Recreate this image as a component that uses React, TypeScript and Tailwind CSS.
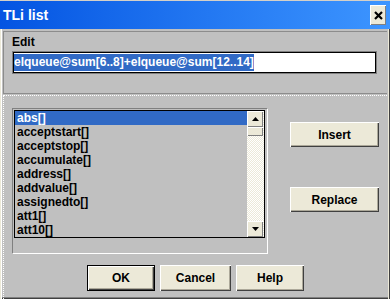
import React from "react";

const items = [
  "abs[]",
  "acceptstart[]",
  "acceptstop[]",
  "accumulate[]",
  "address[]",
  "addvalue[]",
  "assignedto[]",
  "att1[]",
  "att10[]",
];

function WinButton({
  label,
  width,
  isDefault,
}: {
  label: string;
  width: string;
  isDefault?: boolean;
}) {
  return (
    <button
      type="button"
      className={`${width} flex items-center justify-center bg-[#ece9d8] text-[12px] font-bold text-black ${
        isDefault
          ? "border border-black shadow-[inset_1px_1px_#fff,inset_-1px_-1px_#404040,inset_-2px_-2px_#aca899]"
          : "shadow-[inset_1px_1px_#fff,inset_-1px_-1px_#404040,inset_-2px_-2px_#aca899]"
      }`}
    >
      {label}
    </button>
  );
}

function ScrollArrow({ up }: { up?: boolean }) {
  return (
    <div className="flex h-[16px] w-[16px] items-center justify-center bg-[#ece9d8] shadow-[inset_1px_1px_#fff,inset_-1px_-1px_#808080]">
      <svg width="7" height="4" viewBox="0 0 7 4">
        {up ? <polygon points="3.5,0 7,4 0,4" fill="#000" /> : <polygon points="0,0 7,0 3.5,4" fill="#000" />}
      </svg>
    </div>
  );
}

export default function App() {
  return (
    <div
      className="flex h-[299px] w-[390px] flex-col overflow-hidden bg-[#c0c0c0] shadow-[inset_1px_0_#ece9d8,inset_2px_0_#fff,inset_-1px_0_#404040,inset_-2px_0_#ece9d8,inset_0_-1px_#404040,inset_0_-2px_#808080]"
      style={{ fontFamily: '"Liberation Sans", Arial, sans-serif' }}
    >
      {/* title bar */}
      <div className="flex h-[29px] shrink-0 items-center justify-between border-t border-[#d4d0c8] bg-gradient-to-r from-[#0454e2] to-[#3d95ff] pl-[3px] pr-[4px]">
        <span className="text-[14px] font-bold text-white">TLi list</span>
        <div className="flex h-[20px] w-[16px] items-center justify-center bg-[#ece9d8] shadow-[inset_1px_1px_#fff,inset_-1px_-1px_#808080]">
          <svg width="9" height="9" viewBox="0 0 9 9">
            <path d="M1 1 L8 8 M8 1 L1 8" stroke="#000" strokeWidth="2.2" />
          </svg>
        </div>
      </div>

      {/* edit panel */}
      <div className="mx-[3px] mt-[2px] flex h-[63px] shrink-0 flex-col border-l border-t border-b border-[#8c8c8c] pl-[8px] pr-[9px]">
        <span className="mt-[3px] text-[12px] font-bold leading-[14px] text-black">Edit</span>
        <div className="mt-[2px] h-[23px] w-[365px] border border-[#808080]">
          <div className="flex h-full w-full items-center border border-black bg-white">
            <span className="bg-[#316ac5] text-[12px] font-bold leading-[17px] text-white">
              elqueue@sum[6..8]+elqueue@sum[12..14]
            </span>
          </div>
        </div>
      </div>

      {/* list panel */}
      <div className="ml-[3px] mr-[3px] mt-[1px] flex flex-1 flex-col border-l border-t border-dotted border-white pl-[8px] pt-[12px]">
        <div className="flex">
          <div className="h-[146px] w-[256px] border border-b-white border-l-[#808080] border-r-white border-t-[#808080]">
            <div className="ml-[1px] mt-[1px] flex h-[128px] w-[251px] border border-black">
              <div className="flex-1 overflow-hidden bg-[#c0c0c0]">
                {items.map((item, i) => (
                  <div
                    key={item}
                    className={`h-[14px] pl-[2px] text-[12px] font-bold leading-[14px] ${
                      i === 0 ? "bg-[#316ac5] text-white" : "text-black"
                    }`}
                  >
                    {item}
                  </div>
                ))}
              </div>
              <div className="flex w-[17px] flex-col bg-[repeating-conic-gradient(#ece9d8_0_25%,#ffffff_0_50%)] bg-[length:2px_2px]">
                <ScrollArrow up />
                <div className="h-[9px] w-[16px] bg-[#ece9d8] shadow-[inset_1px_1px_#fff,inset_-1px_-1px_#808080]" />
                <div className="flex-1" />
                <ScrollArrow />
              </div>
            </div>
          </div>
          <div className="ml-[22px] mt-[14px] flex flex-col gap-[40px]">
            <WinButton label="Insert" width="h-[25px] w-[89px]" />
            <WinButton label="Replace" width="h-[25px] w-[89px]" />
          </div>
        </div>
        <div className="mr-[8px] mt-[11px] flex justify-center gap-[5px]">
          <WinButton label="OK" width="h-[26px] w-[68px]" isDefault />
          <WinButton label="Cancel" width="h-[26px] w-[71px]" />
          <WinButton label="Help" width="h-[26px] w-[68px]" />
        </div>
      </div>
    </div>
  );
}
